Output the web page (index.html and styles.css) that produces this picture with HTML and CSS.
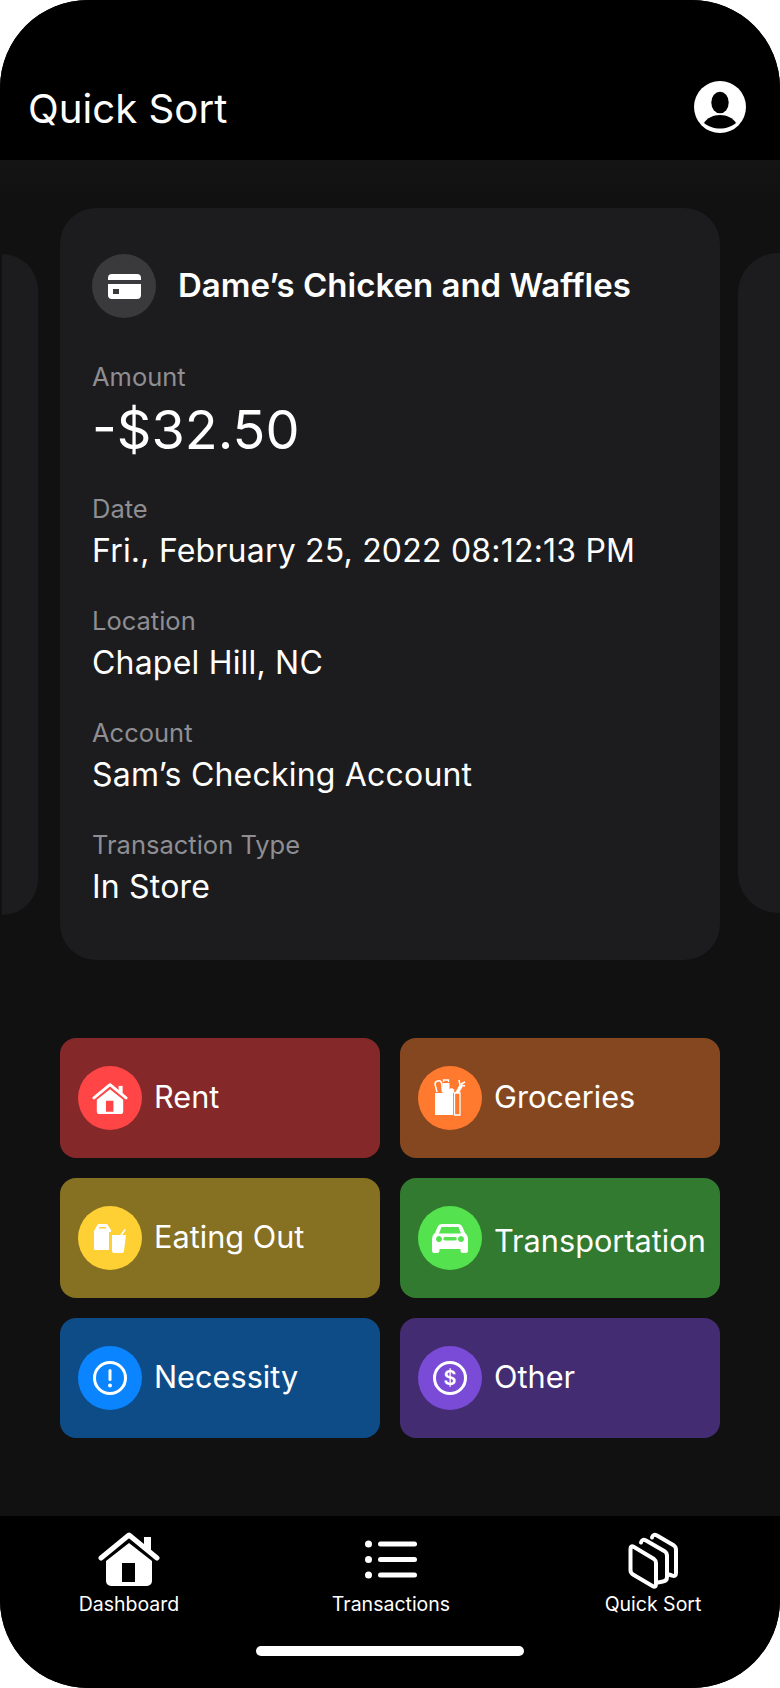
FILE: index.html
```html
<!DOCTYPE html>
<html lang="en">
<head>
<meta charset="utf-8">
<title>Quick Sort</title>
<link rel="stylesheet" href="styles.css">
</head>
<body>
<div class="screen">
  <header class="topbar">
    <h1 class="topbar-title">Quick Sort</h1>
    <svg class="avatar" viewBox="0 0 52 52"><circle cx="26" cy="26" r="26" fill="#fff"/><ellipse cx="26" cy="21.500" rx="8.700" ry="10.800" fill="#000"/><path d="M10 42C13 37 19 34 26 34S39 37 42 42C38 45.500 32 47.500 26 47.500S14 45.500 10 42Z" fill="#000"/></svg>
  </header>
  <main class="content">
    <section class="carousel">
      <div class="peek peek-left"></div>
      <article class="card">
        <div class="card-head">
          <span class="merchant-icon">
            <svg viewBox="0 0 33 25" class="merchant-glyph"><path fill-rule="evenodd" fill="#fff" d="M4 0H29a4 4 0 0 1 4 4V6H0V4a4 4 0 0 1 4-4ZM0 10H33V21a4 4 0 0 1-4 4H4a4 4 0 0 1-4-4ZM5 15v5h6v-5Z"/></svg>
          </span>
          <h2 class="merchant-name">Dame’s Chicken and Waffles</h2>
        </div>
        <div class="field field-first">
          <div class="label">Amount</div>
          <div class="amount">-$32.50</div>
        </div>
        <div class="field field-date">
          <div class="label">Date</div>
          <div class="value">Fri., February 25, 2022 08:12:13 PM</div>
        </div>
        <div class="field">
          <div class="label">Location</div>
          <div class="value">Chapel Hill, NC</div>
        </div>
        <div class="field">
          <div class="label">Account</div>
          <div class="value">Sam’s Checking Account</div>
        </div>
        <div class="field">
          <div class="label">Transaction Type</div>
          <div class="value">In Store</div>
        </div>
      </article>
      <div class="peek peek-right"></div>
    </section>
    <section class="categories">
      <button class="cat cat-rent">
        <span class="cat-icon">
          <svg class="glyph-home" viewBox="0 0 62 54"><path fill="#fff" fill-rule="evenodd" d="M8 29 31 11 54 29V49a5 5 0 0 1-5 5H13a5 5 0 0 1-5-5ZM24 31V50H37V31Z"/><path fill="#fff" d="M46 5h7v13h-7Z"/><path d="M3 26 31 3 59 26" fill="none" stroke="#fff" stroke-width="5" stroke-linecap="round" stroke-linejoin="round"/></svg>
        </span>
        <span class="cat-name">Rent</span>
      </button>
      <button class="cat cat-groceries">
        <span class="cat-icon">
          <svg class="glyph-bag" viewBox="0 0 32 38"><path fill="#fff" d="M1 14H19V36H1Z"/><path fill="none" stroke="#fff" stroke-width="1.300" d="M20.500 14H26V36H20.500Z"/><path fill="none" stroke="#fff" stroke-width="1.500" d="M3 13 1.200 6a3.300 3.300 0 0 1 6.500-1.500L8.500 13"/><path fill="#fff" d="M8.500 4h7v10h-7Z"/><path fill="none" stroke="#fff" stroke-width="1.300" d="M9.500 3V1h5v2"/><circle cx="17.500" cy="12" r="2.800" fill="#fff"/><path fill="#fff" d="M21 14 26 5l3 2-4 7Z"/><path fill="none" stroke="#fff" stroke-width="1.500" d="M26 6 25 1M27 5 31 3M27 6 31 7"/></svg>
        </span>
        <span class="cat-name">Groceries</span>
      </button>
      <button class="cat cat-eating">
        <span class="cat-icon">
          <svg class="glyph-food" viewBox="0 0 33 31"><path fill="#fff" fill-rule="evenodd" d="M4 1H13L17 7V9H15V27H1a1 1 0 0 1-1-1V8ZM5 4V5.500H12V4Z"/><path fill="#fff" d="M18 12H26L30.500 6 32 7 28 12H32L30 28a2 2 0 0 1-2 2H20a2 2 0 0 1-2-2Z"/></svg>
        </span>
        <span class="cat-name">Eating Out</span>
      </button>
      <button class="cat cat-transport">
        <span class="cat-icon">
          <svg class="glyph-car" viewBox="0 0 36 29"><path fill="#fff" fill-rule="evenodd" d="M10 0H26C28 0 29.500 1 30.500 3L33 9C35 10.500 36 13 36 15V26.500A2.500 2.500 0 0 1 33.500 29H31a2.500 2.500 0 0 1-2.500-2.500V25H7.500V26.500A2.500 2.500 0 0 1 5 29H2.500A2.500 2.500 0 0 1 0 26.500V15C0 13 1 10.500 3 9L5.500 3C6.500 1 8 0 10 0ZM9.500 3 7 9.500H29L26.500 3ZM7 12a3 3 0 1 0 .01 0ZM29 12a3 3 0 1 0 .01 0ZM13 13a1.500 1.500 0 0 0 0 3.500H23A1.500 1.500 0 0 0 23 13Z"/></svg>
        </span>
        <span class="cat-name cat-name-low">Transportation</span>
      </button>
      <button class="cat cat-necessity">
        <span class="cat-icon">
          <svg class="glyph-ring" viewBox="0 0 34 34"><circle cx="17" cy="17" r="15.500" fill="none" stroke="#fff" stroke-width="3"/><rect x="15.500" y="8" width="3" height="12" rx="1.500" fill="#fff"/><circle cx="17" cy="24.500" r="2" fill="#fff"/></svg>
        </span>
        <span class="cat-name">Necessity</span>
      </button>
      <button class="cat cat-other">
        <span class="cat-icon">
          <svg class="glyph-ring" viewBox="0 0 34 34"><circle cx="17" cy="17" r="15.500" fill="none" stroke="#fff" stroke-width="3"/><text class="dollar" x="17" y="24" text-anchor="middle">$</text></svg>
        </span>
        <span class="cat-name">Other</span>
      </button>
    </section>
  </main>
  <footer class="tabbar">
    <nav class="tabs">
      <a class="tab">
        <svg class="tab-home" viewBox="0 0 62 54"><path fill="#fff" fill-rule="evenodd" d="M8 29 31 11 54 29V49a5 5 0 0 1-5 5H13a5 5 0 0 1-5-5ZM24 31V50H37V31Z"/><path fill="#fff" d="M46 5h7v13h-7Z"/><path d="M3 26 31 3 59 26" fill="none" stroke="#fff" stroke-width="5" stroke-linecap="round" stroke-linejoin="round"/></svg>
        <span class="tab-label">Dashboard</span>
      </a>
      <a class="tab">
        <svg class="tab-list" viewBox="0 0 52 58"><g fill="#fff"><circle cx="3.500" cy="12" r="3.500"/><circle cx="3.500" cy="27.500" r="3.500"/><circle cx="3.500" cy="43" r="3.500"/><rect x="13" y="9.500" width="39" height="5" rx="2.500"/><rect x="13" y="25" width="39" height="5" rx="2.500"/><rect x="13" y="40.500" width="39" height="5" rx="2.500"/></g></svg>
        <span class="tab-label">Transactions</span>
      </a>
      <a class="tab">
        <svg class="tab-stack" viewBox="0 0 52 58"><g fill="none" stroke="#fff" stroke-width="4" stroke-linejoin="round" stroke-linecap="round"><path d="M3.500 17Q3.500 13 7 15L27 27Q29 28.500 29 31V52Q29 56 25.500 54L6 42.500Q3.500 41 3.500 38Z"/><path d="M14 10.500Q15 6.500 19 8.500L38 19.500Q40 21 40 24V45Q40 49 36 49.500L31 50.500"/><path d="M25 5.500Q26 1.500 30 3.500L47 13.500Q49 15 49 18V41Q49 45 45 43.500L42 42.500"/></g></svg>
        <span class="tab-label">Quick Sort</span>
      </a>
    </nav>
    <div class="home-indicator"></div>
  </footer>
</div>
</body>
</html>
```

FILE: styles.css
```css
* { box-sizing: border-box; }
html, body { margin: 0; padding: 0; background: #fff; }
body { width: 780px; height: 1688px; overflow: hidden; font-family: Inter, "Noto Sans", sans-serif; color: #fff; }
h1, h2 { margin: 0; font-weight: 400; }
svg { display: block; }

.screen { width: 780px; height: 1688px; border-radius: 88px; overflow: hidden; background: #000; display: flex; flex-direction: column; }

.topbar { height: 160px; flex: none; background: #000; display: flex; align-items: flex-start; justify-content: space-between; padding: 81px 34px 0 28px; }
.topbar-title { font-size: 40.200px; line-height: 56px; }
.avatar { width: 52px; height: 52px; }

.content { flex: 1; background: linear-gradient(#141414, #111 40px); padding-top: 48px; }

.carousel { display: flex; align-items: center; padding-left: 2px; gap: 22px; }
.peek { flex: none; background: #1c1c1e; }
.peek-left { width: 36px; height: 661px; border-radius: 0 40px 40px 0; }
.peek-right { width: 42px; height: 660px; border-radius: 40px 0 0 40px; margin-left: -4px; margin-top: -3px; }

.card { flex: none; width: 660px; height: 752px; background: #1c1c1e; border-radius: 36px; padding: 46px 32px 0; }
.card-head { display: flex; align-items: center; gap: 22px; }
.merchant-icon { width: 64px; height: 64px; border-radius: 50%; background: #3a3a3c; display: flex; align-items: center; justify-content: center; flex: none; }
.merchant-glyph { width: 33px; height: 25px; }
.merchant-name { font-size: 33px; line-height: 40px; font-weight: 600; padding-bottom: 2px; }

.field { margin-top: 34px; }
.field-first { margin-top: 43px; }
.field-date { margin-top: 32px; }
.label { font-size: 25.500px; line-height: 32px; color: #8e8e93; margin-bottom: 6px; }
.value { font-size: 32px; line-height: 40px; letter-spacing: 0.200px; }
.amount { font-size: 54px; line-height: 62px; }

.categories { display: grid; grid-template-columns: 320px 320px; gap: 20px; padding: 0 60px; margin-top: 78px; }
.cat { height: 120px; border: 0; border-radius: 16px; padding: 0 0 0 18px; display: flex; align-items: center; gap: 12px; font: inherit; color: #fff; text-align: left; }
.cat-icon { width: 64px; height: 64px; border-radius: 50%; display: flex; align-items: center; justify-content: center; flex: none; }
.cat-name { font-size: 30.700px; line-height: 40px; padding-bottom: 2px; }
.cat-name-low { padding-top: 8px; }
.cat-rent { background: #84282a; }
.cat-rent .cat-icon { background: #ff4545; }
.cat-groceries { background: #854720; }
.cat-groceries .cat-icon { background: #ff7a2f; }
.cat-eating { background: #867022; }
.cat-eating .cat-icon { background: #ffd033; }
.cat-transport { background: #327a2f; }
.cat-transport .cat-icon { background: #54e34e; }
.cat-necessity { background: #0e4c88; }
.cat-necessity .cat-icon { background: #0a84ff; }
.cat-other { background: #442c72; }
.cat-other .cat-icon { background: #7a4bd6; }

.glyph-home { width: 36px; height: 31px; }
.glyph-bag { width: 32px; height: 38px; }
.glyph-food { width: 33px; height: 31px; }
.glyph-car { width: 36px; height: 29px; }
.glyph-ring { width: 34px; height: 34px; }
.dollar { font-family: Inter, sans-serif; font-size: 20px; font-weight: 600; fill: #fff; }

.tabbar { height: 172px; flex: none; background: #000; display: flex; flex-direction: column; align-items: center; padding-top: 16px; }
.tabs { width: 100%; display: flex; justify-content: space-between; padding: 0 62px 0 64px; }
.tab { width: 130px; display: flex; flex-direction: column; align-items: center; gap: 2px; }
.tab-home { width: 62px; height: 54px; margin-bottom: 4px; }
.tab-list { width: 52px; height: 58px; }
.tab-stack { width: 52px; height: 58px; }
.tab-label { font-size: 19.500px; line-height: 24px; white-space: nowrap; }
.home-indicator { width: 268px; height: 10px; border-radius: 5px; background: #fff; margin-top: 30px; }
```
